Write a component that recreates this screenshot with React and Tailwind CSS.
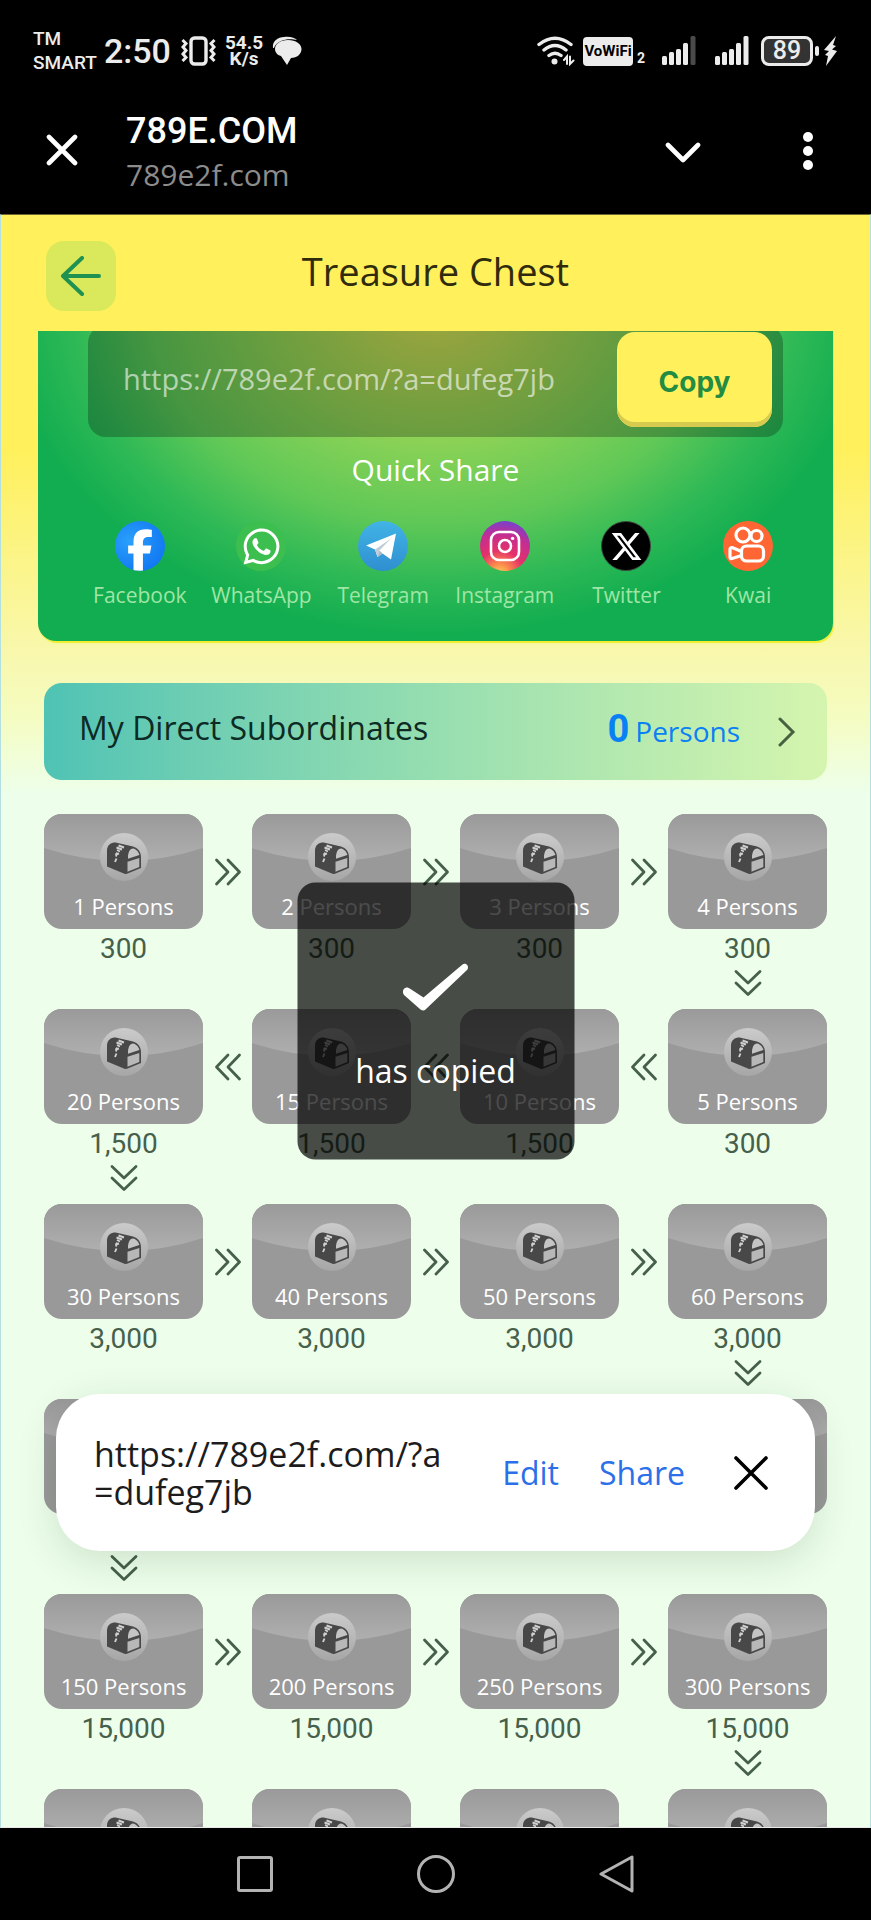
import { Fragment, useState } from 'react';
import { FaWhatsapp, FaXTwitter, FaFacebookF } from 'react-icons/fa6';

const LINK = 'https://789e2f.com/?a=dufeg7jb';

const rows = [
    { people: [1, 2, 3, 4], amount: '300', dir: 'right' },
    { people: [20, 15, 10, 5], amount: '1,500', dir: 'left', lastAmount: '300' },
    { people: [30, 40, 50, 60], amount: '3,000', dir: 'right' },
    { people: [100, 90, 80, 70], amount: '3,000', dir: 'left' },
    { people: [150, 200, 250, 300], amount: '15,000', dir: 'right' },
    { people: [500, 450, 400, 350], amount: '15,000', dir: 'left' },
];

const shares = [
    { label: 'Facebook', icon: <FacebookIcon /> },
    { label: 'WhatsApp', icon: <WhatsAppIcon /> },
    { label: 'Telegram', icon: <TelegramIcon /> },
    { label: 'Instagram', icon: <InstagramIcon /> },
    { label: 'Twitter', icon: <TwitterIcon /> },
    { label: 'Kwai', icon: <KwaiIcon /> },
];

function FacebookIcon() {
    return (
        <span className="flex h-[50px] w-[50px] items-end justify-center overflow-hidden rounded-full bg-radial-[at_30%_40%] from-[#2aa0fb] to-[#0a6cf0]">
            <FaFacebookF className="h-[42px] w-[26px] text-white" />
        </span>
    );
}

function WhatsAppIcon() {
    return (
        <span className="flex h-[50px] w-[50px] items-center justify-center rounded-full bg-[#3dbf4f]">
            <FaWhatsapp size={41} className="text-white" />
        </span>
    );
}

function TelegramIcon() {
    return (
        <svg width="50" height="50" viewBox="0 0 50 50">
            <defs>
                <linearGradient id="tg" x1="0" y1="0" x2="0" y2="1">
                    <stop offset="0" stopColor="#41b4e6" />
                    <stop offset="1" stopColor="#2f8fd0" />
                </linearGradient>
            </defs>
            <circle cx="25" cy="25" r="25" fill="url(#tg)" />
            <path d="M8 24.5 38 12.5 33 38.5 24.5 32.5 19.5 36 17 28.5Z" fill="#fff" />
            <path d="M17 28.5 33 17.5 21.5 29.5 19.5 36Z" fill="#c3cdd8" />
            <path d="M21.5 29.5 24.5 32.5 19.5 36Z" fill="#a9b6c4" />
        </svg>
    );
}

function InstagramIcon() {
    return (
        <svg width="50" height="50" viewBox="0 0 50 50">
            <defs>
                <radialGradient id="ig" cx="0.4" cy="1.05" r="1.1">
                    <stop offset="0" stopColor="#fdd05c" />
                    <stop offset="0.18" stopColor="#fb8a4c" />
                    <stop offset="0.42" stopColor="#e5316a" />
                    <stop offset="0.72" stopColor="#c42d92" />
                    <stop offset="1" stopColor="#6a45d6" />
                </radialGradient>
            </defs>
            <circle cx="25" cy="25" r="25" fill="url(#ig)" />
            <rect x="11" y="11" width="28" height="28" rx="8" fill="none" stroke="#fff" strokeWidth="2.6" />
            <circle cx="25" cy="25" r="6" fill="none" stroke="#fff" strokeWidth="2.6" />
            <circle cx="32.6" cy="17.4" r="1.7" fill="#fff" />
        </svg>
    );
}

function TwitterIcon() {
    return (
        <span className="flex h-[50px] w-[50px] items-center justify-center rounded-full border border-[#3c4a41] bg-black">
            <FaXTwitter size={33} className="text-white" />
        </span>
    );
}

function KwaiIcon() {
    return (
        <svg width="50" height="50" viewBox="0 0 50 50" fill="none" stroke="#fff" strokeWidth="3.2" strokeLinejoin="round">
            <circle cx="25" cy="25" r="25" fill="#ff6633" stroke="none" />
            <circle cx="20" cy="14" r="7" />
            <circle cx="33.5" cy="15" r="5.5" />
            <rect x="18.5" y="25" width="22" height="15" rx="5" />
            <path d="M18.5 30.500 9 26.500Q7 26.500 7 28.500V36Q7 38 9 37.500L18.500 34.500" />
        </svg>
    );
}

function ChestIcon() {
    return (
        <svg width="48" height="48" viewBox="0 0 48 48">
            <defs>
                <linearGradient id="coin" x1="0" y1="0" x2="0" y2="1">
                    <stop offset="0" stopColor="#cbcbcb" />
                    <stop offset="1" stopColor="#a6a6a6" />
                </linearGradient>
            </defs>
            <circle cx="24" cy="24" r="24" fill="url(#coin)" />
            <path d="M7 17.5C7 12 11 9.5 15.5 9.5L33 13.5C38 15 41 19 41 24.5V35L27 40.8 25 41 7 33.5Z" fill="#484848" />
            <path d="M28 24.5C28 17 32 13.8 35.5 16.5 38.5 18.5 39.3 21 39.3 22L28 25.8Z" fill="#c4c4c4" />
            <path d="M27.5 28.7 39.3 25V34L27.5 38.8Z" fill="#b8b8b8" />
            <path d="M15 29 16.5 25.5M16 23.5 17 19.5M15.2 21.5 19 20.5M17 17 20 18.5M16.5 14.5 22 16.5M18.5 12.5 24 14.5" stroke="#d0d0d0" strokeWidth="1.9" />
        </svg>
    );
}

// Points down by default
function DoubleChevron({ className }) {
    return (
        <svg className={className} width="28" height="28" viewBox="0 0 28 28" fill="none" stroke="#47604c" strokeWidth="2.8" strokeLinecap="round" strokeLinejoin="round">
            <path d="M2 2.5 14 14 26 2.5M2 14 14 25.5 26 14" />
        </svg>
    );
}

function ChestCard({ people }) {
    return (
        <button className="relative flex h-[115px] w-full flex-col items-center overflow-hidden rounded-[18px] bg-[#999999] pt-[19px]">
            <svg className="absolute inset-0 h-full w-full" viewBox="0 0 159 115" preserveAspectRatio="none">
                <defs>
                    <linearGradient id="gloss" x1="0" y1="0" x2="0" y2="1">
                        <stop offset="0" stopColor="#9a9a9a" />
                        <stop offset="1" stopColor="#afafaf" />
                    </linearGradient>
                </defs>
                <path d="M0 0H159V34Q79.5 60 0 34Z" fill="url(#gloss)" />
            </svg>
            <span className="relative"><ChestIcon /></span>
            <span className="relative mt-[9px] text-[22px] leading-8 text-white">{people} Persons</span>
        </button>
    );
}

function ChestRow({ row }) {
    const downIndex = row.dir === 'right' ? 3 : 0;
    return (
        <div className="grid h-[195px] grid-cols-[1fr_49px_1fr_49px_1fr_49px_1fr]">
            {row.people.map((people, i) => (
                <Fragment key={people}>
                    {i > 0 && (
                        <div className="flex h-[115px] items-center justify-center">
                            <DoubleChevron className={row.dir === 'right' ? '-rotate-90' : 'rotate-90'} />
                        </div>
                    )}
                    <div className="flex flex-col items-center">
                        <ChestCard people={people} />
                        <p className="font-[Roboto,sans-serif] text-[28px] leading-10 text-[#47604c]">
                            {i === 3 && row.lastAmount ? row.lastAmount : row.amount}
                        </p>
                        {i === downIndex && <DoubleChevron />}
                    </div>
                </Fragment>
            ))}
        </div>
    );
}

function Signal({ dim }) {
    return (
        <svg width="34" height="30" viewBox="0 0 34 30" fill="#ececec">
            <rect x="0" y="20" width="5" height="9" rx="1.5" />
            <rect x="7" y="16" width="5" height="13" rx="1.5" />
            <rect x="14" y="13" width="5" height="16" rx="1.5" />
            <rect x="21" y="7" width="5" height="22" rx="1.5" />
            <rect x="28.5" y="0" width="5" height="29" rx="1.5" fill={dim ? '#4a4a4a' : '#ececec'} />
        </svg>
    );
}

function StatusBar() {
    return (
        <div className="flex h-[102px] items-center justify-between pl-[33px] pr-[34px] font-[Roboto,sans-serif] font-medium text-[#ececec]">
            <div className="flex items-center">
                <div className="w-[71px] text-[19px] leading-6">TM<br />SMART</div>
                <span className="w-[77px] text-[34px] leading-10">2:50</span>
                <svg width="35" height="30" viewBox="0 0 35 30" fill="none" stroke="#ececec" strokeWidth="3.4">
                    <rect x="10" y="2" width="15" height="26" rx="3.5" />
                    <path d="M1.5 4 5 7.5 2 11 5 14.5 2 18 5 21.5 1.5 25M33.5 4 30 7.5 33 11 30 14.5 33 18 30 21.5 33.5 25" strokeWidth="3" />
                </svg>
                <div className="ml-2 w-10 text-center text-[19px] font-bold leading-4">54.5<br />K/s</div>
                <svg className="ml-2" width="30" height="30" viewBox="0 0 30 30" fill="#ececec">
                    <path d="M1 12C0 5 6 1 12 1 18 0 23 2 25 4 18 2 5 3 2 12Z" />
                    <path d="M16 4C24 4 29.5 8 29.5 13 29.5 18 25 22 19 22L15 29 9 20C5 19 3 16 3 13 3 8 8 4 16 4Z" />
                </svg>
            </div>
            <div className="flex items-center">
                <svg width="38" height="30" viewBox="0 0 38 30" fill="none" stroke="#ececec" strokeWidth="3.4" strokeLinecap="round">
                    <path d="M2 8.5Q18-4 34 8.5M7 14Q18 5 29 14M12 19.5Q18 15 24 19.5" />
                    <circle cx="17.5" cy="25.5" r="3" fill="#ececec" stroke="none" />
                    <path d="M27 24 30 20.5V28M33 20.5V28L36.5 24.5" strokeWidth="2" />
                </svg>
                <span className="ml-2 flex h-[29px] w-[50px] items-center justify-center rounded bg-[#ececec] text-[15px] font-bold text-black">VoWiFi</span>
                <span className="w-[29px] self-end pl-1 text-[14px] font-bold leading-4">2</span>
                <Signal dim />
                <span className="w-[19px]" />
                <Signal />
                <span className="ml-3 flex h-[30px] w-[52px] items-center justify-center rounded-lg border-3 border-[#ececec] bg-[#333333] text-[25px] leading-6">89</span>
                <svg className="ml-0.5" width="22" height="30" viewBox="0 0 22 30" fill="#ececec">
                    <rect x="0" y="10" width="4" height="10" rx="2" />
                    <path d="M21 0 9 14 14 15 10 19 13 20 11 30 22 15 17 13.5 21 10 18 9Z" />
                </svg>
            </div>
        </div>
    );
}

function BrowserBar() {
    return (
        <div className="flex h-[112px] items-start pl-[46px] pr-[53px] text-white">
            <button aria-label="Close" className="mt-8 w-8">
                <svg width="32" height="32" viewBox="0 0 32 32" stroke="#fff" strokeWidth="4.6" strokeLinecap="round">
                    <path d="M3 3 29 29M29 3 3 29" />
                </svg>
            </button>
            <div className="ml-12 flex-1">
                <h1 className="mt-[7px] font-[Roboto,sans-serif] text-[36px] font-medium leading-[44px]">789E.COM</h1>
                <p className="mt-0.5 text-[30px] leading-10 text-[#8c8c8c]">789e2f.com</p>
            </div>
            <button aria-label="Minimize" className="mt-10 w-9">
                <svg width="36" height="22" viewBox="0 0 36 22" fill="none" stroke="#fff" strokeWidth="4.6" strokeLinecap="round" strokeLinejoin="round">
                    <path d="M3 3 18 18 33 3" />
                </svg>
            </button>
            <button aria-label="More options" className="ml-[97px] mt-[29px] w-5">
                <svg width="20" height="40" viewBox="0 0 20 40" fill="#fff">
                    <circle cx="10" cy="6" r="5" />
                    <circle cx="10" cy="20" r="5" />
                    <circle cx="10" cy="34" r="5" />
                </svg>
            </button>
        </div>
    );
}

function ShareCard({ onCopy }) {
    return (
        <section className="-mt-[6px] rounded-b-[18px] bg-[radial-gradient(ellipse_430px_330px_at_50%_-20px,#d8e055,#c0da54_12%,#86d156_44%,#5fc857_66%,#2fb956_84%,#12ad50_100%)] pb-[30px] shadow-[1px_2px_1px_#eef02c]">
            <div className="mx-[50px] flex h-[112px] items-start rounded-[18px] bg-black/25 pl-[35px] pr-[11px] pt-[7px]">
                <label htmlFor="invite" className="sr-only">Invite link</label>
                <input id="invite" readOnly value={LINK} className="mt-[22px] h-12 min-w-0 flex-1 bg-transparent text-[29px] leading-10 text-white/60 outline-none" />
                <button onClick={onCopy} className="h-[95px] w-[155px] rounded-[18px] bg-[#fff05c] pt-1 font-[Inter,sans-serif] text-[28px] font-bold text-[#218c42] shadow-[inset_0_-5px_0_#d6cb4f]">
                    Copy
                </button>
            </div>
            <h3 className="mt-3 text-center text-[30px] leading-[42px] text-white">Quick Share</h3>
            <div className="mt-[30px] grid grid-cols-6 pl-[41px] pr-[24px]">
                {shares.map((s) => (
                    <button key={s.label} className="flex flex-col items-center">
                        {s.icon}
                        <span className="mt-2 text-[21px] leading-8 text-[#9fe6a6]">{s.label}</span>
                    </button>
                ))}
            </div>
        </section>
    );
}

export default function App() {
    const [showToast, setShowToast] = useState(true);
    const [showClipboard, setShowClipboard] = useState(true);

    return (
        <div className="flex h-screen flex-col overflow-hidden bg-black font-['Open_Sans',sans-serif]">
            <StatusBar />
            <BrowserBar />

            <main className="relative flex flex-1 flex-col overflow-hidden border-x border-t border-b border-x-[#b4dfe0] border-t-[#6b6730] border-b-[#e8e8e8] bg-[linear-gradient(to_bottom,#fff05c_235px,#f8f8ae_440px,#f5fcc0_500px,#edffeb_580px)]">
                {/* Page header */}
                <header className="relative z-10 grid h-[116px] shrink-0 grid-cols-[70px_1fr_70px] items-start bg-[#fff05c] px-[45px] pt-[26px]">
                    <button aria-label="Back" className="flex h-[70px] w-[70px] items-center justify-center rounded-[18px] bg-[#dae85c]">
                        <svg width="40" height="40" viewBox="0 0 40 40" fill="none" stroke="#1f9150" strokeWidth="4" strokeLinecap="round" strokeLinejoin="round">
                            <path d="M21 2 2 20 21 38M3 20H38" />
                        </svg>
                    </button>
                    <h2 className="pt-1.5 text-center text-[38px] leading-[48px] text-[#302b0c]">Treasure Chest</h2>
                </header>

                <div className="min-h-0 flex-1 overflow-hidden">
                    <div className="px-[37px]">
                        <ShareCard onCopy={() => setShowToast(true)} />
                    </div>

                    <div className="px-[43px]">
                        {/* Subordinates */}
                        <button className="mt-[42px] flex h-[97px] w-full items-center rounded-[18px] bg-linear-to-r from-[#4fc3b4] via-[#96deb0] to-[#d5f5ae] pl-[35px] pr-[31px]">
                            <span className="flex-1 pb-2 text-left text-[32px] leading-10 text-[#0d2a24]">My Direct Subordinates</span>
                            <span className="flex items-baseline pb-1 text-[28px] leading-10 text-[#0a80f5]">
                                <b className="mr-1.5 font-[Roboto,sans-serif] text-[38px]">0</b>Persons
                            </span>
                            <svg className="ml-[38px]" width="18" height="30" viewBox="0 0 18 30" fill="none" stroke="#47603f" strokeWidth="3" strokeLinecap="round">
                                <path d="M2 2 15 15 2 28" />
                            </svg>
                        </button>

                        {/* Chest levels */}
                        <div className="mt-[34px]">
                            {rows.map((row) => (
                                <ChestRow key={row.people[0]} row={row} />
                            ))}
                        </div>
                    </div>
                </div>

                {showToast && (
                    <div role="status" onClick={() => setShowToast(false)} className="absolute left-1/2 top-1/2 z-20 flex h-[277px] w-[277px] -translate-x-1/2 -translate-y-1/2 flex-col items-center rounded-[18px] bg-black/70 pt-[80px]">
                        <svg width="68" height="50" viewBox="0 0 68 50" fill="#fff">
                            <path d="M1.5 28C3 24.5 6 24 9 26.5L22 35 61 2C64 0 68 3 66 7L24 47Q22 49 19 47L2.5 32.5Q1 30.5 1.5 28Z" />
                        </svg>
                        <p className="mt-[38px] text-[32px] leading-10 text-white">has copied</p>
                    </div>
                )}

                {/* Clipboard preview */}
                {showClipboard && (
                    <div className="absolute inset-x-[55px] bottom-[276px] z-20 flex h-[157px] items-center rounded-[44px] bg-white pl-[38px] pr-[46px] shadow-[0_10px_40px_rgba(0,40,0,0.14)]">
                        <p className="min-w-0 max-w-[352px] flex-1 break-all text-[34px] leading-[38px] text-[#1c1c1c]">{LINK}</p>
                        <div className="ml-auto flex items-center text-[32px] font-medium leading-10 text-[#2b70e8]">
                            <button>Edit</button>
                            <button className="ml-10">Share</button>
                            <button aria-label="Dismiss" className="ml-12" onClick={() => setShowClipboard(false)}>
                                <svg width="36" height="36" viewBox="0 0 36 36" stroke="#000" strokeWidth="3.6" strokeLinecap="round">
                                    <path d="M3 3 33 33M33 3 3 33" />
                                </svg>
                            </button>
                        </div>
                    </div>
                )}
            </main>

            {/* System navigation */}
            <nav className="flex h-[92px] shrink-0 items-center justify-center gap-[143px]">
                <button aria-label="Recent apps">
                    <svg width="38" height="38" viewBox="0 0 38 38" fill="none" stroke="#b3b3b3" strokeWidth="3">
                        <rect x="2.5" y="2.5" width="33" height="33" rx="1.5" />
                    </svg>
                </button>
                <button aria-label="Home">
                    <svg width="38" height="38" viewBox="0 0 38 38" fill="none" stroke="#b3b3b3" strokeWidth="3">
                        <circle cx="19" cy="19" r="17.5" />
                    </svg>
                </button>
                <button aria-label="Go back">
                    <svg width="38" height="38" viewBox="0 0 38 38" fill="none" stroke="#b3b3b3" strokeWidth="3" strokeLinejoin="round">
                        <path d="M34 2V36L3 19Z" />
                    </svg>
                </button>
            </nav>
        </div>
    );
}
